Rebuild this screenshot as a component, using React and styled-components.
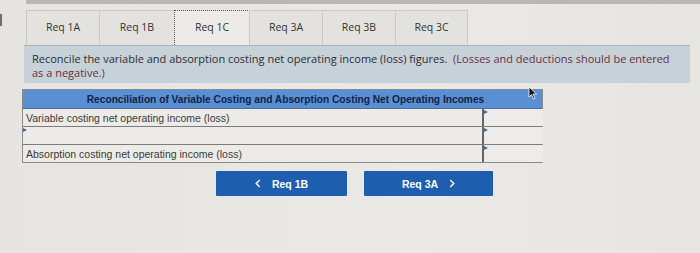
import React from "react";
import styled, { createGlobalStyle } from "styled-components";

const Global = createGlobalStyle`
  html, body { margin: 0; padding: 0; }
  body {
    background: #e8e6e2;
    width: 700px;
    height: 253px;
    overflow: hidden;
    font-family: "Open Sans", "Liberation Sans", sans-serif;
  }
`;

const Page = styled.div`
  position: relative;
  width: 700px;
  height: 253px;
  background: linear-gradient(90deg, #e6e4e0 0%, #ebe9e5 60%, #e7e5e1 100%);
`;

const TopBand = styled.div`
  margin-left: 26px;
  height: 4px;
  background: #b9b8b6;
`;

const Edge = styled.div`
  position: absolute;
  left: 0;
  top: 14px;
  width: 2px;
  height: 12px;
  background: #6d6d6d;
`;

const Tabs = styled.div`
  display: flex;
  margin: 6px 0 0 27px;
  height: 35px;
`;

const Tab = styled.div`
  box-sizing: border-box;
  width: ${(p) => p.$w}px;
  height: 35px;
  display: flex;
  align-items: center;
  justify-content: center;
  font-size: 10.5px;
  color: #333;
  background: ${(p) => (p.$active ? "#ecebe8" : "#e3e2df")};
  border: ${(p) => (p.$active ? "1px dotted #555" : "1px solid #c9c8c6")};
  border-bottom: none;
  margin-left: -1px;
  padding-bottom: 2px;
`;

const Panel = styled.div`
  box-sizing: border-box;
  margin-left: 24px;
  width: 666px;
  height: 38px;
  background: #c6d1d8;
  border-top: 1px solid #a9b4bb;
  padding: 6px 8px 0 8px;
  font-size: 11px;
  line-height: 14px;
  color: #2c2e33;
`;

const Line = styled.div`
  white-space: nowrap;
`;

const Note = styled.span`
  color: #6b3040;
`;

const Table = styled.div`
  box-sizing: border-box;
  margin: 6px 0 0 22px;
  width: 521px;
  border: 1px solid #8a8a8a;
  font-family: "Liberation Sans", Arial, sans-serif;
`;

const Header = styled.div`
  height: 18px;
  background: #5b8fd3;
  color: #0f2348;
  font-weight: bold;
  font-size: 10.2px;
  display: flex;
  align-items: center;
  justify-content: center;
  padding-left: 6px;
  border-bottom: 1px solid #4a6f9f;
`;

const Row = styled.div`
  display: grid;
  grid-template-columns: 459px 1fr;
  height: 17px;
  border-bottom: ${(p) => (p.$last ? "none" : "1px solid #7c7c7c")};
  background: #ecebe8;
`;

const Label = styled.div`
  font-size: 10.5px;
  color: #3a3a3a;
  padding-left: 3px;
  display: flex;
  align-items: center;
  position: relative;
`;

const Input = styled.div`
  position: relative;
  border-left: 2px solid #666;
  margin-right: -1px;
  background: #edecea;
  &::before {
    content: "";
    position: absolute;
    left: 0;
    top: 1px;
    border-left: 4px solid #3e6aa0;
    border-top: 2.5px solid transparent;
    border-bottom: 2.5px solid transparent;
  }
`;

const Marker = styled.span`
  position: absolute;
  left: 0;
  top: 1px;
  border-left: 4px solid #3e6aa0;
  border-top: 2.5px solid transparent;
  border-bottom: 2.5px solid transparent;
`;

const Buttons = styled.div`
  display: flex;
  gap: 17px;
  margin: 8px 0 0 216px;
`;

const Btn = styled.div`
  box-sizing: border-box;
  width: ${(p) => p.$w}px;
  height: 25px;
  background: #1d5fae;
  color: #fff;
  font-family: "Liberation Sans", Arial, sans-serif;
  font-weight: bold;
  font-size: 10.5px;
  display: flex;
  align-items: center;
  justify-content: center;
  gap: 11px;
  border-radius: 1px;
`;

const Chev = styled.svg`
  width: 6px;
  height: 9px;
`;

const Cursor = styled.svg`
  position: absolute;
  left: 528px;
  top: 86px;
  width: 10px;
  height: 14px;
`;

const Left = () => (
  <Chev viewBox="0 0 6 10">
    <path d="M5 1 L1 5 L5 9" stroke="#fff" strokeWidth="1.6" fill="none" />
  </Chev>
);
const Right = () => (
  <Chev viewBox="0 0 6 10">
    <path d="M1 1 L5 5 L1 9" stroke="#fff" strokeWidth="1.6" fill="none" />
  </Chev>
);

const tabs = [
  ["Req 1A", 74],
  ["Req 1B", 76],
  ["Req 1C", 76, true],
  ["Req 3A", 74],
  ["Req 3B", 74],
  ["Req 3C", 73],
];

export default function App() {
  return (
    <Page>
      <Global />
      <Edge />
      <TopBand />
      <Tabs>
        {tabs.map(([t, w, a]) => (
          <Tab key={t} $w={w} $active={a}>
            {t}
          </Tab>
        ))}
      </Tabs>
      <Panel>
        <Line>
          Reconcile the variable and absorption costing net operating income (loss) figures.{"\u00a0 "}
          <Note>(Losses and deductions should be entered</Note>
        </Line>
        <Line>
          <Note>as a negative.)</Note>
        </Line>
      </Panel>
      <Table>
        <Header>Reconciliation of Variable Costing and Absorption Costing Net Operating Incomes</Header>
        <Row>
          <Label>Variable costing net operating income (loss)</Label>
          <Input />
        </Row>
        <Row>
          <Label>
            <Marker />
          </Label>
          <Input />
        </Row>
        <Row $last>
          <Label>Absorption costing net operating income (loss)</Label>
          <Input />
        </Row>
      </Table>
      <Buttons>
        <Btn $w={131}>
          <Left />
          Req 1B
        </Btn>
        <Btn $w={129}>
          Req 3A
          <Right />
        </Btn>
      </Buttons>
      <Cursor viewBox="0 0 10 14">
        <path d="M1 1 L1 11 L3.5 8.5 L5.5 13 L7 12.3 L5 8 L8.5 8 Z" fill="#111" stroke="#fff" strokeWidth="0.8" />
      </Cursor>
    </Page>
  );
}
